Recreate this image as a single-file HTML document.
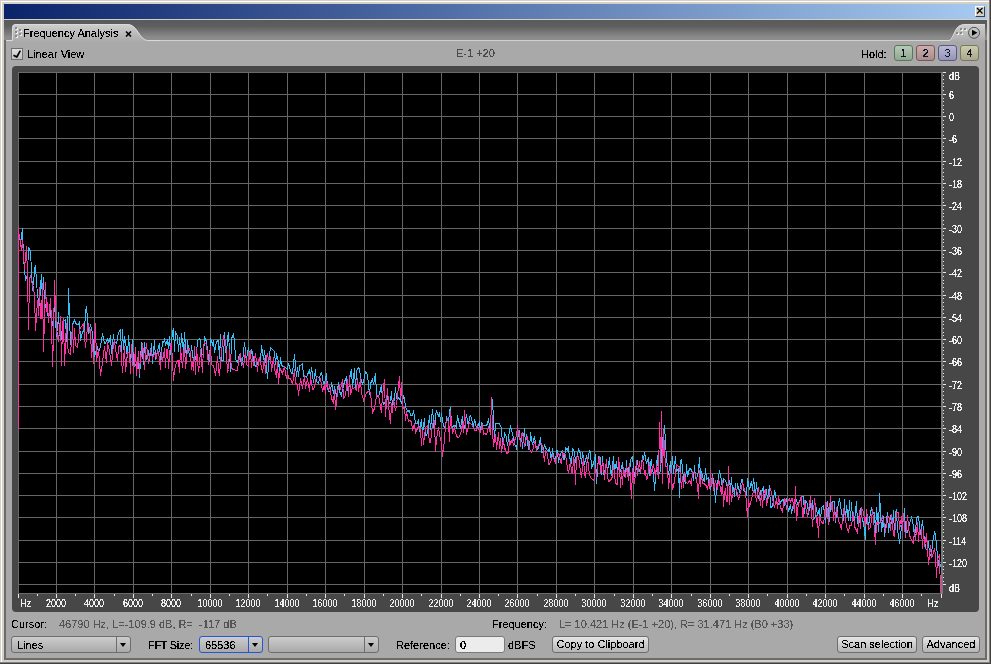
<!DOCTYPE html>
<html><head><meta charset="utf-8">
<style>
*{margin:0;padding:0;box-sizing:border-box}
html,body{width:991px;height:664px;overflow:hidden;background:#d4d0c8;font-family:"Liberation Sans",sans-serif;font-size:11px;color:#000}
.a{position:absolute}
.t{position:absolute;white-space:nowrap;line-height:12px;filter:url(#crisp)}
.c{display:inline-block;filter:url(#crisp)}
.btn{position:absolute;height:17px;border:1px solid #6e6e6e;border-radius:3px;background:linear-gradient(#e6e6e6,#b4b4b4);text-align:center;line-height:14px}
.cb{position:absolute;height:17px;border:1px solid #6e6e6e;border-radius:3px;background:linear-gradient(#cdcdcd,#a9a9a9)}
.cb .dv{position:absolute;top:0;bottom:0;width:1px;background:#6e6e6e}
.cb .ar{position:absolute;width:0;height:0;border-left:3.5px solid transparent;border-right:3.5px solid transparent;border-top:4px solid #000}
.hb{position:absolute;top:45px;width:19px;height:16px;border-radius:3px;text-align:center;line-height:14px;font-size:11px;color:#0a0a28}
</style></head><body>
<svg width="0" height="0" style="position:absolute"><filter id="crisp" x="-10%" y="-10%" width="120%" height="120%"><feComponentTransfer><feFuncA type="discrete" tableValues="0 0 1 1 1"/></feComponentTransfer></filter></svg>
<!-- outer frame -->
<div class="a" style="left:1px;top:1px;width:988px;height:661px;border-left:1px solid #fff;border-top:1px solid #fff"></div>
<div class="a" style="left:989px;top:0;width:1px;height:663px;background:#808080"></div>
<div class="a" style="left:990px;top:0;width:1px;height:664px;background:#404040"></div>
<div class="a" style="left:0;top:662px;width:990px;height:1px;background:#808080"></div>
<div class="a" style="left:0;top:663px;width:991px;height:1px;background:#404040"></div>
<!-- title bar -->
<div class="a" style="left:4px;top:4px;width:983px;height:15px;background:linear-gradient(90deg,#0a246a,#a6caf0)"></div>
<div class="a" style="left:975px;top:6px;width:10px;height:11px;background:#d4d0c8;border-left:1px solid #fff;border-top:1px solid #fff;border-right:1px solid #404040;border-bottom:1px solid #404040"></div>
<svg class="a" style="left:975px;top:6px" width="10" height="11"><path d="M2 2L7.5 7.5M7.5 2L2 7.5" stroke="#000" stroke-width="1.2"/></svg>
<!-- panel -->
<div class="a" style="left:4px;top:20px;width:983px;height:640px;background:#6b6b6b"></div>
<div class="a" style="left:4px;top:20px;width:983px;height:20px;background:linear-gradient(#5a5a5a 0%,#5e5e5e 30%,#8a8a8a 85%,#8e8e8e 100%)"></div>
<div class="a" style="left:6px;top:40px;width:979px;height:618px;background:#a9a9a9;border-top:1px solid #d0d0d0"></div>
<!-- tab -->
<svg class="a" style="left:0;top:20px" width="160" height="22">
<defs><linearGradient id="tg" x1="0" y1="0" x2="0" y2="1"><stop offset="0" stop-color="#cfcfcf"/><stop offset="1" stop-color="#aaaaaa"/></linearGradient></defs>
<path d="M6 21 L12 21 L12 8 Q12 4 16 4 L127.5 4 C137.5 4 139.5 20 147.5 20 L160 20 L160 22 L6 22Z" fill="url(#tg)"/>
<path d="M6 20.5 L12.5 20.5 L12.5 8 Q12.5 4.5 16 4.5 L127.5 4.5 C137.5 4.5 139.5 20.5 147.5 20.5 L160 20.5" fill="none" stroke="#dadada" stroke-width="1"/>
</svg>
<div class="t" style="left:23px;top:27px">Frequency Analysis</div>
<svg class="a" style="left:125px;top:30px" width="8" height="7"><path d="M1 1.5L6 6.5M6 1.5L1 6.5" stroke="#000" stroke-width="1.6"/></svg>
<!-- right tab -->
<svg class="a" style="left:940px;top:20px" width="47" height="22">
<defs><linearGradient id="tg2" x1="0" y1="0" x2="0" y2="1"><stop offset="0" stop-color="#cfcfcf"/><stop offset="1" stop-color="#aaaaaa"/></linearGradient></defs>
<path d="M0 21 L9 21 C12 21 14 12 17 8 C19 5 22 4 26 4 L45 4 L45 22 L0 22Z" fill="url(#tg2)"/>
<path d="M0 20.5 L9 20.5 C12 20.5 14 12 17 8 C19 5.5 22 4.5 26 4.5 L45 4.5" fill="none" stroke="#dadada"/>
<circle cx="34" cy="12.8" r="5.5" fill="none" stroke="#555" stroke-width="1"/>
<path d="M32 9.8 L37.5 12.8 L32 15.8Z" fill="#000"/>
</svg>
<svg class="a" style="left:0;top:0" width="991" height="45">
<g fill="#f2f2f2"><rect x="16" y="28" width="2" height="2"/><rect x="16" y="32" width="2" height="2"/><rect x="16" y="36" width="2" height="2"/><rect x="20" y="30" width="2" height="2"/><rect x="20" y="34" width="2" height="2"/>
<rect x="961" y="29" width="2" height="2"/><rect x="965" y="29" width="2" height="2"/><rect x="957" y="33" width="2" height="2"/><rect x="961" y="33" width="2" height="2"/></g>
<g fill="#8a8a8a"><rect x="15" y="27" width="2" height="2"/><rect x="15" y="31" width="2" height="2"/><rect x="15" y="35" width="2" height="2"/><rect x="19" y="29" width="2" height="2"/><rect x="19" y="33" width="2" height="2"/>
<rect x="960" y="28" width="2" height="2"/><rect x="964" y="28" width="2" height="2"/><rect x="956" y="32" width="2" height="2"/><rect x="960" y="32" width="2" height="2"/></g>
</svg>
<!-- top row -->
<div class="a" style="left:11px;top:48px;width:12px;height:12px;border:1px solid #6e6e6e;background:linear-gradient(#e0e0e0,#c0c0c0)"></div>
<svg class="a" style="left:11px;top:48px" width="12" height="12"><path d="M2.5 7.3 L5.8 9 L9.3 2.6" fill="none" stroke="#000" stroke-width="1.7" stroke-linejoin="round"/></svg>
<div class="t" style="left:27px;top:48px">Linear View</div>
<div class="t" style="left:456px;top:47px;color:#4a4a4a">E-1 +20</div>
<div class="t" style="left:861px;top:48px">Hold:</div>
<div class="hb" style="left:894px;border:1px solid #587858;background:linear-gradient(#b6cbb6,#8ea88e)"><span class="c">1</span></div>
<div class="hb" style="left:916px;border:1px solid #7a5858;background:linear-gradient(#cbadad,#a98c8c)"><span class="c">2</span></div>
<div class="hb" style="left:938px;border:1px solid #5a5a80;background:linear-gradient(#babad6,#9494b6)"><span class="c">3</span></div>
<div class="hb" style="left:960px;border:1px solid #78785a;background:linear-gradient(#cbcbad,#a8a88c)"><span class="c">4</span></div>
<!-- plot frame -->
<div class="a" style="left:12px;top:66px;width:967px;height:546px;background:#474747;border-radius:4px"></div>
<svg id="plot" class="a" style="left:0;top:0" width="991" height="664"><rect x="18" y="72" width="923" height="521" fill="#000"/><path d="M56.5 72V593M94.5 72V593M133.5 72V593M171.5 72V593M210.5 72V593M248.5 72V593M287.5 72V593M325.5 72V593M364.5 72V593M402.5 72V593M441.5 72V593M479.5 72V593M517.5 72V593M556.5 72V593M594.5 72V593M633.5 72V593M671.5 72V593M710.5 72V593M748.5 72V593M787.5 72V593M825.5 72V593M864.5 72V593M902.5 72V593M18 94.5H941M18 116.5H941M18 138.5H941M18 161.5H941M18 183.5H941M18 205.5H941M18 228.5H941M18 250.5H941M18 272.5H941M18 295.5H941M18 317.5H941M18 339.5H941M18 361.5H941M18 384.5H941M18 406.5H941M18 428.5H941M18 451.5H941M18 473.5H941M18 495.5H941M18 517.5H941M18 540.5H941M18 562.5H941M18 584.5H941" stroke="#666" stroke-width="1" fill="none"/><path d="M18.5 72V594M18 72.5H942M18 593.5H942" stroke="#6a6a6a" stroke-width="1" fill="none"/><rect x="941" y="72" width="2" height="522" fill="#7a7a7a"/><path d="M18.5 594V598M56.5 594V598M94.5 594V598M133.5 594V598M171.5 594V598M210.5 594V598M248.5 594V598M287.5 594V598M325.5 594V598M364.5 594V598M402.5 594V598M441.5 594V598M479.5 594V598M517.5 594V598M556.5 594V598M594.5 594V598M633.5 594V598M671.5 594V598M710.5 594V598M748.5 594V598M787.5 594V598M825.5 594V598M864.5 594V598M902.5 594V598M941.5 594V598M37.5 594V596M75.5 594V596M114.5 594V596M152.5 594V596M191.5 594V596M229.5 594V596M267.5 594V596M306.5 594V596M344.5 594V596M383.5 594V596M421.5 594V596M460.5 594V596M498.5 594V596M537.5 594V596M575.5 594V596M614.5 594V596M652.5 594V596M691.5 594V596M729.5 594V596M767.5 594V596M806.5 594V596M844.5 594V596M883.5 594V596M921.5 594V596M943 72.5H946M943 94.5H946M943 116.5H946M943 138.5H946M943 161.5H946M943 183.5H946M943 205.5H946M943 228.5H946M943 250.5H946M943 272.5H946M943 295.5H946M943 317.5H946M943 339.5H946M943 361.5H946M943 384.5H946M943 406.5H946M943 428.5H946M943 451.5H946M943 473.5H946M943 495.5H946M943 517.5H946M943 540.5H946M943 562.5H946M943 584.5H946M943 75.5H944M943 79.5H944M943 83.5H944M943 86.5H944M943 90.5H944M943 98.5H944M943 101.5H944M943 105.5H944M943 109.5H944M943 112.5H944M943 120.5H944M943 124.5H944M943 127.5H944M943 131.5H944M943 135.5H944M943 142.5H944M943 146.5H944M943 150.5H944M943 153.5H944M943 157.5H944M943 164.5H944M943 168.5H944M943 172.5H944M943 176.5H944M943 179.5H944M943 187.5H944M943 190.5H944M943 194.5H944M943 198.5H944M943 202.5H944M943 209.5H944M943 213.5H944M943 216.5H944M943 220.5H944M943 224.5H944M943 231.5H944M943 235.5H944M943 239.5H944M943 242.5H944M943 246.5H944M943 254.5H944M943 257.5H944M943 261.5H944M943 265.5H944M943 268.5H944M943 276.5H944M943 280.5H944M943 283.5H944M943 287.5H944M943 291.5H944M943 298.5H944M943 302.5H944M943 306.5H944M943 309.5H944M943 313.5H944M943 321.5H944M943 324.5H944M943 328.5H944M943 332.5H944M943 335.5H944M943 343.5H944M943 347.5H944M943 350.5H944M943 354.5H944M943 358.5H944M943 365.5H944M943 369.5H944M943 373.5H944M943 376.5H944M943 380.5H944M943 387.5H944M943 391.5H944M943 395.5H944M943 399.5H944M943 402.5H944M943 410.5H944M943 413.5H944M943 417.5H944M943 421.5H944M943 425.5H944M943 432.5H944M943 436.5H944M943 439.5H944M943 443.5H944M943 447.5H944M943 454.5H944M943 458.5H944M943 462.5H944M943 465.5H944M943 469.5H944M943 477.5H944M943 480.5H944M943 484.5H944M943 488.5H944M943 491.5H944M943 499.5H944M943 503.5H944M943 506.5H944M943 510.5H944M943 514.5H944M943 521.5H944M943 525.5H944M943 529.5H944M943 532.5H944M943 536.5H944M943 543.5H944M943 547.5H944M943 551.5H944M943 555.5H944M943 558.5H944M943 566.5H944M943 569.5H944M943 573.5H944M943 577.5H944M943 581.5H944" stroke="#e8e8e8" stroke-width="1" fill="none"/><g font-family="Liberation Sans" font-size="9" fill="#f0f0f0" filter="url(#crisp)"><text transform="translate(56.0 607) scale(1 1.12)" text-anchor="middle">2000</text><text transform="translate(94.0 607) scale(1 1.12)" text-anchor="middle">4000</text><text transform="translate(133.0 607) scale(1 1.12)" text-anchor="middle">6000</text><text transform="translate(171.0 607) scale(1 1.12)" text-anchor="middle">8000</text><text transform="translate(210.0 607) scale(1 1.12)" text-anchor="middle">10000</text><text transform="translate(248.0 607) scale(1 1.12)" text-anchor="middle">12000</text><text transform="translate(287.0 607) scale(1 1.12)" text-anchor="middle">14000</text><text transform="translate(325.0 607) scale(1 1.12)" text-anchor="middle">16000</text><text transform="translate(364.0 607) scale(1 1.12)" text-anchor="middle">18000</text><text transform="translate(402.0 607) scale(1 1.12)" text-anchor="middle">20000</text><text transform="translate(441.0 607) scale(1 1.12)" text-anchor="middle">22000</text><text transform="translate(479.0 607) scale(1 1.12)" text-anchor="middle">24000</text><text transform="translate(517.0 607) scale(1 1.12)" text-anchor="middle">26000</text><text transform="translate(556.0 607) scale(1 1.12)" text-anchor="middle">28000</text><text transform="translate(594.0 607) scale(1 1.12)" text-anchor="middle">30000</text><text transform="translate(633.0 607) scale(1 1.12)" text-anchor="middle">32000</text><text transform="translate(671.0 607) scale(1 1.12)" text-anchor="middle">34000</text><text transform="translate(710.0 607) scale(1 1.12)" text-anchor="middle">36000</text><text transform="translate(748.0 607) scale(1 1.12)" text-anchor="middle">38000</text><text transform="translate(787.0 607) scale(1 1.12)" text-anchor="middle">40000</text><text transform="translate(825.0 607) scale(1 1.12)" text-anchor="middle">42000</text><text transform="translate(864.0 607) scale(1 1.12)" text-anchor="middle">44000</text><text transform="translate(902.0 607) scale(1 1.12)" text-anchor="middle">46000</text><text transform="translate(20 607) scale(1 1.12)">Hz</text><text transform="translate(927.5 607) scale(1 1.12)">Hz</text><text transform="translate(949 80) scale(1 1.12)">dB</text><text transform="translate(949 99) scale(1 1.12)">6</text><text transform="translate(949 121) scale(1 1.12)">0</text><text transform="translate(949 143) scale(1 1.12)">-6</text><text transform="translate(949 166) scale(1 1.12)">-12</text><text transform="translate(949 188) scale(1 1.12)">-18</text><text transform="translate(949 210) scale(1 1.12)">-24</text><text transform="translate(949 233) scale(1 1.12)">-30</text><text transform="translate(949 255) scale(1 1.12)">-36</text><text transform="translate(949 277) scale(1 1.12)">-42</text><text transform="translate(949 300) scale(1 1.12)">-48</text><text transform="translate(949 322) scale(1 1.12)">-54</text><text transform="translate(949 344) scale(1 1.12)">-60</text><text transform="translate(949 366) scale(1 1.12)">-66</text><text transform="translate(949 389) scale(1 1.12)">-72</text><text transform="translate(949 411) scale(1 1.12)">-78</text><text transform="translate(949 433) scale(1 1.12)">-84</text><text transform="translate(949 456) scale(1 1.12)">-90</text><text transform="translate(949 478) scale(1 1.12)">-96</text><text transform="translate(949 500) scale(1 1.12)">-102</text><text transform="translate(949 522) scale(1 1.12)">-108</text><text transform="translate(949 545) scale(1 1.12)">-114</text><text transform="translate(949 567) scale(1 1.12)">-120</text><text transform="translate(949 592) scale(1 1.12)">dB</text></g><polyline points="19.5,236.5 20.5,243.5 22.5,228.5 23.5,258.5 25.5,280.5 27.5,274.5 28.5,247.5 30.5,251.5 32.5,290.5 33.5,285.5 34.5,268.5 35.5,266.5 37.5,295.5 39.5,305.5 40.5,286.5 41.5,274.5 42.5,303.5 43.5,277.5 44.5,301.5 46.5,310.5 48.5,317.5 50.5,306.5 51.5,328.5 53.5,318.5 54.5,303.5 56.5,336.5 57.5,331.5 58.5,312.5 59.5,334.5 61.5,338.5 62.5,324.5 63.5,319.5 64.5,320.5 65.5,319.5 66.5,338.5 67.5,344.5 68.5,288.5 70.5,344.5 71.5,340.5 72.5,324.5 74.5,320.5 76.5,324.5 78.5,324.5 79.5,321.5 80.5,340.5 82.5,331.5 84.5,330.5 85.5,312.5 86.5,306.5 88.5,333.5 90.5,324.5 92.5,332.5 94.5,356.5 96.5,349.5 97.5,346.5 98.5,352.5 100.5,346.5 102.5,333.5 104.5,343.5 106.5,342.5 107.5,338.5 108.5,342.5 109.5,341.5 110.5,335.5 111.5,353.5 113.5,334.5 114.5,342.5 115.5,342.5 116.5,343.5 118.5,332.5 120.5,329.5 121.5,352.5 122.5,329.5 123.5,349.5 124.5,336.5 126.5,349.5 127.5,357.5 128.5,335.5 130.5,360.5 132.5,339.5 133.5,364.5 134.5,365.5 136.5,364.5 138.5,359.5 139.5,377.5 140.5,360.5 141.5,342.5 143.5,364.5 144.5,342.5 146.5,359.5 148.5,350.5 149.5,360.5 151.5,343.5 152.5,363.5 154.5,340.5 155.5,359.5 157.5,350.5 159.5,343.5 160.5,360.5 161.5,352.5 162.5,341.5 163.5,342.5 164.5,339.5 165.5,344.5 167.5,340.5 168.5,348.5 169.5,336.5 170.5,354.5 172.5,331.5 173.5,328.5 174.5,351.5 175.5,331.5 177.5,336.5 178.5,351.5 179.5,337.5 180.5,352.5 181.5,333.5 183.5,351.5 184.5,332.5 186.5,359.5 187.5,340.5 189.5,356.5 190.5,357.5 191.5,345.5 193.5,361.5 194.5,352.5 195.5,359.5 196.5,354.5 197.5,340.5 199.5,338.5 200.5,340.5 201.5,354.5 203.5,354.5 204.5,337.5 206.5,341.5 208.5,358.5 209.5,361.5 210.5,338.5 212.5,344.5 213.5,340.5 214.5,352.5 216.5,341.5 218.5,340.5 219.5,358.5 220.5,334.5 221.5,360.5 223.5,360.5 224.5,332.5 225.5,352.5 226.5,353.5 227.5,338.5 228.5,332.5 230.5,371.5 231.5,338.5 233.5,334.5 234.5,340.5 235.5,359.5 237.5,362.5 239.5,354.5 241.5,364.5 242.5,361.5 244.5,342.5 246.5,361.5 247.5,351.5 248.5,348.5 250.5,358.5 251.5,349.5 252.5,352.5 254.5,365.5 256.5,366.5 258.5,360.5 260.5,360.5 261.5,345.5 263.5,359.5 264.5,350.5 266.5,366.5 267.5,378.5 269.5,354.5 270.5,347.5 272.5,349.5 274.5,351.5 275.5,364.5 276.5,353.5 278.5,362.5 279.5,371.5 280.5,357.5 281.5,364.5 282.5,366.5 284.5,366.5 286.5,368.5 287.5,369.5 288.5,363.5 290.5,370.5 291.5,373.5 292.5,373.5 293.5,363.5 294.5,354.5 296.5,376.5 297.5,367.5 298.5,376.5 299.5,365.5 300.5,365.5 301.5,364.5 302.5,363.5 303.5,376.5 304.5,375.5 306.5,377.5 307.5,374.5 309.5,370.5 310.5,377.5 311.5,367.5 313.5,382.5 315.5,369.5 316.5,381.5 318.5,383.5 320.5,373.5 321.5,372.5 323.5,383.5 324.5,383.5 326.5,373.5 327.5,388.5 328.5,391.5 329.5,391.5 330.5,391.5 331.5,382.5 333.5,393.5 334.5,386.5 336.5,396.5 338.5,382.5 339.5,391.5 341.5,395.5 342.5,389.5 344.5,381.5 346.5,377.5 347.5,389.5 348.5,391.5 350.5,372.5 351.5,370.5 352.5,387.5 354.5,368.5 355.5,389.5 356.5,370.5 358.5,367.5 359.5,369.5 361.5,381.5 362.5,383.5 363.5,381.5 365.5,371.5 367.5,374.5 369.5,394.5 370.5,383.5 372.5,379.5 373.5,384.5 375.5,373.5 376.5,394.5 378.5,397.5 379.5,393.5 381.5,385.5 382.5,399.5 383.5,404.5 385.5,401.5 387.5,397.5 388.5,402.5 389.5,403.5 390.5,401.5 391.5,391.5 392.5,407.5 394.5,398.5 395.5,387.5 396.5,397.5 397.5,395.5 398.5,398.5 399.5,398.5 401.5,402.5 402.5,400.5 403.5,396.5 404.5,398.5 405.5,406.5 407.5,411.5 409.5,410.5 410.5,415.5 411.5,415.5 412.5,415.5 413.5,410.5 415.5,423.5 417.5,423.5 418.5,419.5 419.5,431.5 421.5,419.5 422.5,434.5 424.5,418.5 425.5,435.5 427.5,434.5 428.5,425.5 429.5,415.5 430.5,429.5 431.5,418.5 432.5,409.5 433.5,419.5 434.5,436.5 435.5,414.5 436.5,411.5 438.5,415.5 439.5,412.5 440.5,421.5 441.5,413.5 443.5,425.5 444.5,427.5 445.5,428.5 446.5,416.5 448.5,422.5 449.5,411.5 450.5,407.5 451.5,424.5 452.5,428.5 453.5,425.5 455.5,425.5 456.5,427.5 457.5,415.5 458.5,420.5 460.5,428.5 462.5,416.5 463.5,429.5 464.5,428.5 466.5,414.5 468.5,426.5 469.5,416.5 470.5,415.5 471.5,418.5 473.5,427.5 474.5,419.5 475.5,422.5 476.5,429.5 477.5,426.5 479.5,422.5 480.5,430.5 481.5,422.5 483.5,425.5 484.5,425.5 485.5,425.5 487.5,424.5 488.5,418.5 489.5,427.5 490.5,420.5 492.5,399.5 493.5,420.5 494.5,438.5 495.5,423.5 497.5,423.5 499.5,423.5 501.5,428.5 502.5,445.5 503.5,444.5 504.5,432.5 506.5,437.5 507.5,445.5 509.5,430.5 510.5,426.5 512.5,433.5 514.5,443.5 516.5,448.5 518.5,433.5 519.5,431.5 520.5,443.5 521.5,435.5 522.5,448.5 524.5,428.5 525.5,445.5 526.5,434.5 528.5,449.5 529.5,449.5 530.5,432.5 532.5,444.5 534.5,436.5 536.5,449.5 538.5,448.5 540.5,437.5 541.5,452.5 542.5,452.5 544.5,445.5 546.5,449.5 548.5,451.5 549.5,447.5 550.5,456.5 551.5,459.5 552.5,448.5 553.5,457.5 555.5,461.5 556.5,450.5 557.5,450.5 558.5,462.5 560.5,453.5 562.5,450.5 563.5,459.5 564.5,459.5 565.5,447.5 567.5,450.5 568.5,446.5 569.5,458.5 570.5,458.5 571.5,463.5 572.5,448.5 574.5,451.5 575.5,462.5 577.5,454.5 578.5,449.5 580.5,453.5 581.5,463.5 582.5,452.5 583.5,456.5 584.5,464.5 586.5,455.5 587.5,462.5 589.5,450.5 590.5,451.5 591.5,467.5 593.5,463.5 595.5,454.5 596.5,483.5 597.5,470.5 598.5,456.5 599.5,460.5 600.5,457.5 601.5,474.5 602.5,456.5 603.5,474.5 604.5,473.5 606.5,461.5 607.5,471.5 609.5,457.5 610.5,472.5 611.5,474.5 613.5,456.5 614.5,471.5 616.5,461.5 617.5,473.5 618.5,460.5 620.5,471.5 622.5,462.5 623.5,475.5 625.5,476.5 626.5,460.5 627.5,475.5 628.5,467.5 629.5,475.5 630.5,459.5 632.5,456.5 633.5,467.5 634.5,476.5 635.5,473.5 637.5,460.5 638.5,468.5 640.5,472.5 642.5,455.5 643.5,459.5 644.5,452.5 646.5,463.5 648.5,457.5 649.5,475.5 650.5,462.5 651.5,460.5 652.5,470.5 653.5,473.5 654.5,490.5 656.5,465.5 657.5,455.5 658.5,475.5 660.5,470.5 662.5,440.5 664.5,425.5 666.5,458.5 668.5,474.5 670.5,461.5 671.5,473.5 672.5,456.5 673.5,473.5 675.5,456.5 676.5,471.5 678.5,468.5 679.5,497.5 680.5,460.5 681.5,459.5 682.5,467.5 683.5,479.5 684.5,479.5 685.5,483.5 686.5,464.5 687.5,476.5 689.5,468.5 691.5,469.5 693.5,480.5 694.5,465.5 695.5,477.5 696.5,479.5 698.5,470.5 699.5,457.5 700.5,478.5 701.5,471.5 703.5,480.5 704.5,481.5 705.5,468.5 706.5,479.5 708.5,477.5 709.5,488.5 710.5,489.5 712.5,474.5 714.5,487.5 715.5,502.5 716.5,488.5 718.5,477.5 719.5,470.5 721.5,480.5 722.5,488.5 723.5,478.5 725.5,480.5 727.5,487.5 729.5,480.5 730.5,488.5 731.5,477.5 732.5,492.5 733.5,487.5 734.5,496.5 735.5,483.5 736.5,494.5 737.5,483.5 739.5,492.5 740.5,486.5 741.5,479.5 742.5,479.5 743.5,490.5 745.5,491.5 746.5,495.5 747.5,478.5 749.5,489.5 751.5,481.5 752.5,490.5 753.5,478.5 754.5,485.5 755.5,495.5 756.5,482.5 757.5,493.5 759.5,500.5 760.5,490.5 761.5,491.5 763.5,487.5 764.5,499.5 766.5,489.5 767.5,500.5 769.5,485.5 770.5,507.5 772.5,506.5 774.5,491.5 775.5,493.5 776.5,502.5 777.5,503.5 779.5,504.5 781.5,500.5 783.5,499.5 784.5,504.5 786.5,498.5 788.5,511.5 790.5,504.5 791.5,513.5 793.5,503.5 795.5,500.5 796.5,499.5 797.5,504.5 798.5,504.5 800.5,498.5 801.5,496.5 802.5,496.5 803.5,496.5 804.5,513.5 805.5,500.5 807.5,503.5 808.5,514.5 810.5,499.5 811.5,515.5 812.5,500.5 813.5,519.5 815.5,516.5 816.5,507.5 817.5,515.5 819.5,508.5 820.5,520.5 821.5,507.5 823.5,505.5 825.5,522.5 827.5,501.5 829.5,521.5 830.5,503.5 831.5,502.5 833.5,501.5 834.5,501.5 835.5,522.5 836.5,514.5 838.5,503.5 839.5,498.5 841.5,512.5 843.5,520.5 844.5,499.5 845.5,521.5 846.5,505.5 848.5,520.5 849.5,500.5 850.5,520.5 851.5,502.5 852.5,519.5 854.5,521.5 856.5,501.5 857.5,523.5 859.5,522.5 860.5,508.5 862.5,520.5 863.5,522.5 864.5,531.5 865.5,539.5 866.5,509.5 868.5,526.5 870.5,512.5 871.5,507.5 872.5,513.5 874.5,512.5 875.5,533.5 876.5,507.5 877.5,517.5 878.5,531.5 879.5,493.5 881.5,531.5 883.5,516.5 884.5,536.5 886.5,519.5 887.5,512.5 888.5,532.5 890.5,515.5 892.5,526.5 893.5,510.5 894.5,534.5 895.5,512.5 896.5,510.5 897.5,531.5 898.5,534.5 899.5,543.5 901.5,526.5 903.5,519.5 904.5,508.5 905.5,533.5 906.5,531.5 907.5,532.5 909.5,523.5 911.5,517.5 912.5,520.5 914.5,535.5 915.5,533.5 916.5,517.5 918.5,516.5 920.5,534.5 922.5,520.5 923.5,531.5 925.5,548.5 927.5,550.5 928.5,541.5 929.5,553.5 931.5,556.5 932.5,542.5 934.5,532.5 935.5,534.5 936.5,544.5 937.5,556.5 939.5,569.5 940.5,564.5" fill="none" stroke="#36bef8" stroke-width="1" shape-rendering="crispEdges"/><path d="M18.5 331V336" stroke="#36bef8"/><polyline points="19.5,234.5 21.5,250.5 22.5,240.5 24.5,269.5 26.5,246.5 27.5,274.5 28.5,329.5 29.5,279.5 30.5,275.5 32.5,285.5 34.5,294.5 35.5,330.5 37.5,300.5 38.5,315.5 39.5,287.5 40.5,318.5 41.5,318.5 42.5,283.5 43.5,351.5 45.5,282.5 46.5,311.5 47.5,302.5 48.5,322.5 50.5,298.5 51.5,321.5 52.5,366.5 53.5,336.5 54.5,280.5 55.5,309.5 56.5,331.5 58.5,341.5 60.5,316.5 61.5,365.5 62.5,323.5 63.5,318.5 64.5,365.5 65.5,343.5 66.5,323.5 67.5,344.5 68.5,352.5 70.5,354.5 72.5,325.5 73.5,352.5 74.5,328.5 75.5,345.5 77.5,347.5 79.5,329.5 81.5,326.5 83.5,323.5 85.5,347.5 87.5,327.5 88.5,323.5 89.5,331.5 90.5,329.5 91.5,357.5 92.5,339.5 93.5,363.5 94.5,339.5 95.5,323.5 96.5,361.5 98.5,349.5 100.5,375.5 101.5,369.5 102.5,362.5 104.5,346.5 106.5,362.5 107.5,342.5 109.5,351.5 111.5,365.5 113.5,343.5 114.5,340.5 115.5,349.5 117.5,360.5 118.5,347.5 119.5,345.5 120.5,345.5 122.5,372.5 124.5,346.5 125.5,371.5 127.5,352.5 129.5,352.5 130.5,373.5 131.5,344.5 133.5,373.5 135.5,347.5 136.5,375.5 138.5,351.5 139.5,373.5 140.5,355.5 141.5,356.5 142.5,343.5 143.5,351.5 144.5,369.5 145.5,353.5 146.5,343.5 147.5,353.5 148.5,363.5 150.5,349.5 152.5,358.5 154.5,353.5 156.5,357.5 157.5,351.5 158.5,351.5 160.5,369.5 161.5,351.5 162.5,361.5 164.5,348.5 165.5,367.5 166.5,349.5 167.5,349.5 168.5,368.5 170.5,343.5 171.5,343.5 173.5,380.5 174.5,370.5 176.5,361.5 178.5,360.5 179.5,372.5 180.5,348.5 182.5,367.5 184.5,344.5 185.5,368.5 187.5,349.5 189.5,348.5 190.5,352.5 191.5,369.5 192.5,362.5 193.5,370.5 194.5,346.5 195.5,374.5 196.5,348.5 198.5,371.5 199.5,365.5 200.5,349.5 202.5,372.5 203.5,345.5 204.5,342.5 206.5,344.5 208.5,364.5 210.5,346.5 211.5,364.5 212.5,365.5 213.5,365.5 215.5,375.5 217.5,356.5 218.5,369.5 219.5,375.5 221.5,350.5 223.5,336.5 225.5,341.5 227.5,371.5 228.5,369.5 229.5,349.5 231.5,367.5 232.5,369.5 233.5,369.5 234.5,369.5 235.5,370.5 237.5,370.5 238.5,361.5 240.5,353.5 241.5,361.5 243.5,366.5 245.5,351.5 246.5,364.5 248.5,366.5 249.5,354.5 250.5,350.5 251.5,367.5 252.5,356.5 253.5,365.5 255.5,353.5 257.5,371.5 258.5,360.5 259.5,358.5 261.5,367.5 262.5,372.5 264.5,358.5 265.5,373.5 266.5,356.5 267.5,354.5 268.5,359.5 270.5,356.5 271.5,371.5 273.5,357.5 274.5,370.5 275.5,371.5 276.5,377.5 277.5,361.5 278.5,383.5 279.5,372.5 280.5,369.5 282.5,373.5 283.5,369.5 284.5,367.5 286.5,378.5 287.5,371.5 288.5,378.5 290.5,378.5 292.5,384.5 294.5,369.5 295.5,383.5 297.5,384.5 298.5,395.5 300.5,378.5 302.5,388.5 304.5,375.5 305.5,388.5 307.5,378.5 309.5,391.5 310.5,376.5 312.5,389.5 314.5,388.5 315.5,379.5 317.5,376.5 319.5,378.5 320.5,378.5 322.5,391.5 324.5,384.5 325.5,394.5 326.5,380.5 328.5,390.5 329.5,385.5 331.5,398.5 333.5,402.5 334.5,389.5 335.5,409.5 336.5,403.5 337.5,390.5 339.5,386.5 340.5,388.5 341.5,385.5 342.5,379.5 343.5,398.5 345.5,395.5 347.5,379.5 348.5,396.5 349.5,375.5 350.5,394.5 352.5,387.5 353.5,388.5 354.5,387.5 356.5,390.5 357.5,378.5 358.5,391.5 360.5,378.5 361.5,394.5 362.5,395.5 363.5,400.5 364.5,398.5 366.5,392.5 368.5,391.5 370.5,392.5 372.5,412.5 374.5,408.5 376.5,395.5 378.5,395.5 379.5,400.5 380.5,407.5 381.5,412.5 382.5,394.5 384.5,379.5 385.5,416.5 387.5,388.5 389.5,416.5 390.5,423.5 391.5,403.5 392.5,412.5 393.5,398.5 395.5,410.5 396.5,405.5 397.5,395.5 399.5,376.5 400.5,398.5 401.5,382.5 402.5,408.5 404.5,407.5 405.5,420.5 406.5,411.5 408.5,421.5 409.5,420.5 411.5,421.5 412.5,430.5 414.5,423.5 415.5,432.5 416.5,430.5 418.5,426.5 420.5,430.5 421.5,445.5 422.5,430.5 423.5,444.5 425.5,427.5 427.5,425.5 429.5,442.5 430.5,442.5 432.5,423.5 434.5,420.5 435.5,451.5 436.5,439.5 438.5,427.5 440.5,439.5 441.5,442.5 442.5,456.5 444.5,440.5 445.5,424.5 447.5,419.5 448.5,422.5 449.5,441.5 450.5,411.5 452.5,433.5 453.5,430.5 454.5,427.5 456.5,436.5 458.5,437.5 460.5,434.5 462.5,423.5 463.5,432.5 464.5,410.5 465.5,423.5 466.5,434.5 468.5,425.5 469.5,422.5 471.5,424.5 472.5,425.5 474.5,430.5 476.5,430.5 477.5,424.5 478.5,429.5 480.5,432.5 482.5,424.5 483.5,434.5 484.5,433.5 486.5,434.5 488.5,427.5 489.5,429.5 490.5,434.5 491.5,397.5 492.5,431.5 493.5,446.5 495.5,434.5 496.5,449.5 498.5,432.5 499.5,448.5 500.5,438.5 501.5,452.5 503.5,438.5 504.5,449.5 505.5,448.5 506.5,453.5 508.5,452.5 509.5,439.5 510.5,443.5 512.5,439.5 513.5,445.5 515.5,437.5 516.5,436.5 517.5,425.5 518.5,433.5 519.5,433.5 520.5,446.5 521.5,433.5 522.5,432.5 524.5,446.5 526.5,437.5 527.5,436.5 529.5,449.5 531.5,452.5 533.5,447.5 534.5,441.5 536.5,449.5 538.5,444.5 540.5,444.5 541.5,443.5 542.5,446.5 544.5,461.5 545.5,450.5 547.5,453.5 548.5,464.5 550.5,463.5 552.5,455.5 554.5,460.5 555.5,463.5 556.5,455.5 557.5,453.5 559.5,454.5 560.5,462.5 561.5,463.5 562.5,452.5 563.5,454.5 565.5,454.5 567.5,468.5 568.5,472.5 570.5,461.5 571.5,472.5 572.5,473.5 573.5,458.5 574.5,460.5 575.5,484.5 576.5,456.5 577.5,455.5 578.5,456.5 580.5,471.5 581.5,477.5 583.5,457.5 584.5,474.5 585.5,476.5 587.5,457.5 589.5,475.5 591.5,478.5 593.5,480.5 594.5,477.5 595.5,468.5 596.5,477.5 597.5,466.5 599.5,456.5 600.5,473.5 602.5,462.5 603.5,463.5 604.5,479.5 606.5,459.5 607.5,475.5 608.5,481.5 610.5,480.5 612.5,476.5 613.5,464.5 615.5,483.5 617.5,484.5 618.5,457.5 619.5,466.5 620.5,487.5 621.5,470.5 622.5,484.5 623.5,467.5 625.5,477.5 626.5,466.5 628.5,480.5 629.5,463.5 631.5,498.5 632.5,468.5 634.5,483.5 636.5,460.5 637.5,475.5 639.5,461.5 640.5,472.5 642.5,458.5 644.5,473.5 645.5,471.5 646.5,479.5 647.5,478.5 649.5,462.5 650.5,475.5 652.5,467.5 653.5,465.5 655.5,476.5 656.5,463.5 658.5,478.5 659.5,422.5 660.5,464.5 661.5,411.5 662.5,483.5 663.5,430.5 665.5,466.5 667.5,466.5 668.5,488.5 670.5,467.5 672.5,489.5 674.5,481.5 676.5,464.5 678.5,466.5 679.5,466.5 681.5,488.5 682.5,476.5 683.5,487.5 684.5,472.5 685.5,481.5 687.5,483.5 689.5,480.5 691.5,484.5 692.5,471.5 693.5,472.5 694.5,472.5 695.5,473.5 697.5,485.5 698.5,498.5 699.5,470.5 700.5,486.5 701.5,474.5 702.5,483.5 703.5,483.5 705.5,484.5 707.5,488.5 708.5,483.5 709.5,488.5 710.5,470.5 711.5,486.5 712.5,476.5 713.5,490.5 715.5,480.5 717.5,489.5 718.5,479.5 719.5,482.5 721.5,494.5 722.5,480.5 723.5,506.5 724.5,494.5 725.5,488.5 726.5,501.5 727.5,501.5 728.5,466.5 729.5,504.5 730.5,487.5 731.5,501.5 732.5,495.5 733.5,492.5 734.5,488.5 736.5,489.5 738.5,499.5 740.5,492.5 741.5,487.5 742.5,482.5 744.5,490.5 745.5,491.5 746.5,504.5 747.5,517.5 748.5,499.5 749.5,506.5 751.5,499.5 753.5,490.5 755.5,493.5 756.5,501.5 758.5,487.5 760.5,505.5 761.5,491.5 762.5,507.5 763.5,495.5 764.5,490.5 765.5,489.5 766.5,505.5 768.5,496.5 770.5,489.5 771.5,492.5 773.5,503.5 774.5,507.5 776.5,498.5 777.5,508.5 778.5,496.5 780.5,507.5 782.5,511.5 784.5,498.5 785.5,499.5 786.5,509.5 787.5,501.5 788.5,499.5 789.5,498.5 790.5,502.5 791.5,498.5 792.5,498.5 794.5,512.5 795.5,486.5 796.5,520.5 798.5,502.5 799.5,502.5 801.5,495.5 802.5,517.5 803.5,516.5 804.5,500.5 805.5,506.5 807.5,516.5 809.5,504.5 810.5,495.5 811.5,510.5 812.5,526.5 814.5,498.5 815.5,507.5 816.5,522.5 817.5,518.5 818.5,537.5 819.5,515.5 820.5,519.5 821.5,522.5 823.5,523.5 824.5,516.5 825.5,502.5 826.5,502.5 828.5,524.5 830.5,495.5 831.5,509.5 832.5,503.5 833.5,520.5 834.5,509.5 835.5,520.5 836.5,507.5 837.5,515.5 838.5,520.5 840.5,525.5 841.5,529.5 843.5,509.5 844.5,511.5 846.5,526.5 848.5,532.5 849.5,525.5 851.5,525.5 853.5,512.5 854.5,526.5 856.5,530.5 857.5,533.5 859.5,510.5 860.5,528.5 861.5,507.5 863.5,512.5 865.5,525.5 866.5,509.5 868.5,529.5 870.5,527.5 872.5,509.5 874.5,529.5 875.5,544.5 876.5,522.5 878.5,523.5 880.5,522.5 882.5,516.5 884.5,524.5 885.5,532.5 887.5,516.5 889.5,517.5 890.5,530.5 891.5,514.5 893.5,535.5 894.5,536.5 896.5,512.5 898.5,512.5 899.5,529.5 900.5,524.5 901.5,516.5 902.5,530.5 903.5,513.5 905.5,537.5 907.5,515.5 909.5,535.5 910.5,537.5 911.5,540.5 913.5,543.5 914.5,529.5 915.5,539.5 917.5,522.5 918.5,541.5 919.5,529.5 920.5,529.5 921.5,529.5 922.5,548.5 923.5,530.5 924.5,546.5 926.5,533.5 928.5,564.5 930.5,545.5 931.5,557.5 932.5,556.5 934.5,548.5 935.5,555.5 936.5,577.5 937.5,559.5 939.5,554.5 940.5,593.5" fill="none" stroke="#ff30a6" stroke-width="1" shape-rendering="crispEdges"/><path d="M18.5 227V429" stroke="#ff30a6" shape-rendering="crispEdges"/></svg>
<!-- bottom rows -->
<div class="t" style="left:11px;top:618px">Cursor:</div>
<div class="t" style="left:59px;top:618px;color:#555">46790 Hz, L=-109.9 dB, R=&nbsp; -117 dB</div>
<div class="t" style="left:492px;top:618px">Frequency:</div>
<div class="t" style="left:559px;top:618px;color:#555">L= 10.421 Hz (E-1 +20), R= 31.471 Hz (B0 +33)</div>
<div class="cb" style="left:11px;top:636px;width:120px"><div class="t" style="left:5px;top:2px">Lines</div><div class="dv" style="left:104px"></div><div class="ar" style="left:108px;top:6px"></div></div>
<div class="t" style="left:148px;top:639px;letter-spacing:-0.3px">FFT Size:</div>
<div class="cb" style="left:199px;top:636px;width:64px;border-color:#2258d8"><div class="t" style="left:5px;top:2px">65536</div><div class="dv" style="left:48px;background:#2258d8"></div><div class="ar" style="left:52px;top:6px"></div></div>
<div class="cb" style="left:268px;top:636px;width:111px"><div class="dv" style="left:95px"></div><div class="ar" style="left:99px;top:6px"></div></div>
<div class="t" style="left:396px;top:639px">Reference:</div>
<div class="a" style="left:455px;top:636px;width:50px;height:17px;border:1px solid #7a7a7a;border-radius:3px;background:#ececec"></div>
<div class="t" style="left:460px;top:639px">0</div>
<div class="t" style="left:508px;top:639px">dBFS</div>
<div class="btn" style="left:552px;top:636px;width:97px"><span class="c">Copy to Clipboard</span></div>
<div class="btn" style="left:837px;top:636px;width:80px"><span class="c">Scan selection</span></div>
<div class="btn" style="left:922px;top:636px;width:58px"><span class="c">Advanced</span></div>
</body></html>
